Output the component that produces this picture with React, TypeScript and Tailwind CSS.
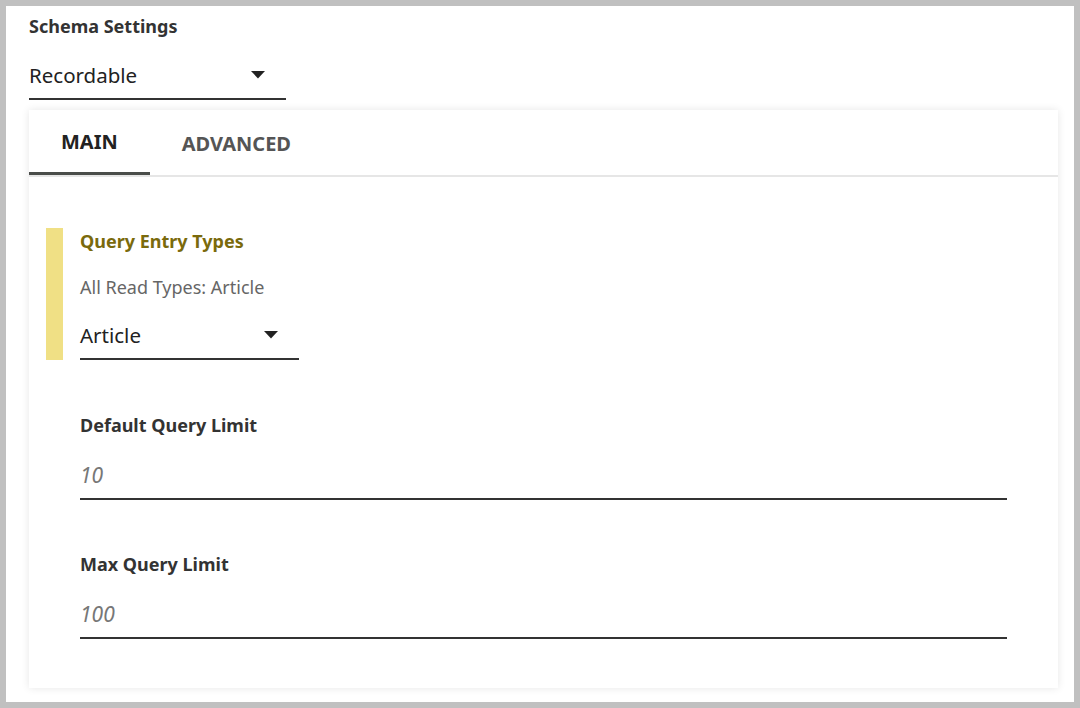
import type { ReactNode } from "react";

function Caret(): ReactNode {
  return (
    <svg width="14" height="8" viewBox="0 0 14 8" className="text-[#222]">
      <path d="M0 0h14L7 7.5z" fill="currentColor" />
    </svg>
  );
}

function Select({ value, width }: { value: string; width: string }): ReactNode {
  return (
    <div className={`flex h-[48px] items-center justify-between border-b-2 border-[#333] pr-[21px] ${width}`}>
      <span className="text-[20.5px] text-[#222]">{value}</span>
      <Caret />
    </div>
  );
}

function NumberField({ label, value }: { label: string; value: string }): ReactNode {
  return (
    <div className="w-[927px]">
      <h4 className="text-[18px] font-bold leading-6 text-[#333]">{label}</h4>
      <div className="mt-[16px] flex h-[47px] items-center border-b-2 border-[#333]">
        <span className="text-[21px] italic text-[#777]">{value}</span>
      </div>
    </div>
  );
}

export default function App(): ReactNode {
  return (
    <div
      className="h-[708px] w-[1080px] border-[6px] border-[#c0c0c0] bg-white pl-[23px] pr-[16px] pt-[8px]"
      style={{ fontFamily: '"Noto Sans", "Open Sans", sans-serif' }}
    >
      <h3 className="text-[18px] font-bold leading-6 text-[#333]">Schema Settings</h3>
      <div className="mt-[14px]">
        <Select value="Recordable" width="w-[257px]" />
      </div>

      <div className="mt-[10px] h-[578px] bg-white shadow-[0_0_8px_rgba(0,0,0,0.1)]">
        <div className="flex h-[67px] border-b-2 border-[#e6e6e6]">
          <div className="-mb-[2px] flex h-[65px] items-center border-b-[3px] border-[#4a4d4a] px-[32px] pt-[2px]">
            <span className="text-[20px] font-bold text-[#222]">MAIN</span>
          </div>
          <div className="flex h-[65px] items-center px-[32px] pt-[2px]">
            <span className="text-[20px] font-bold text-[#555]">ADVANCED</span>
          </div>
        </div>

        <div className="pl-[17px] pt-[51px]">
          <div className="flex gap-[17px]">
            <div className="w-[17px] bg-[#f0e085]" />
            <div>
              <h4 className="mt-[1px] text-[18px] font-bold leading-6 text-[#7a6a0c]">Query Entry Types</h4>
              <p className="mt-[22px] text-[18px] leading-6 text-[#666]">All Read Types: Article</p>
              <div className="mt-[13px]">
                <Select value="Article" width="w-[219px]" />
              </div>
            </div>
          </div>

          <div className="flex flex-col gap-[52px] pl-[34px] pt-[53px]">
            <NumberField label="Default Query Limit" value="10" />
            <NumberField label="Max Query Limit" value="100" />
          </div>
        </div>
      </div>
    </div>
  );
}
